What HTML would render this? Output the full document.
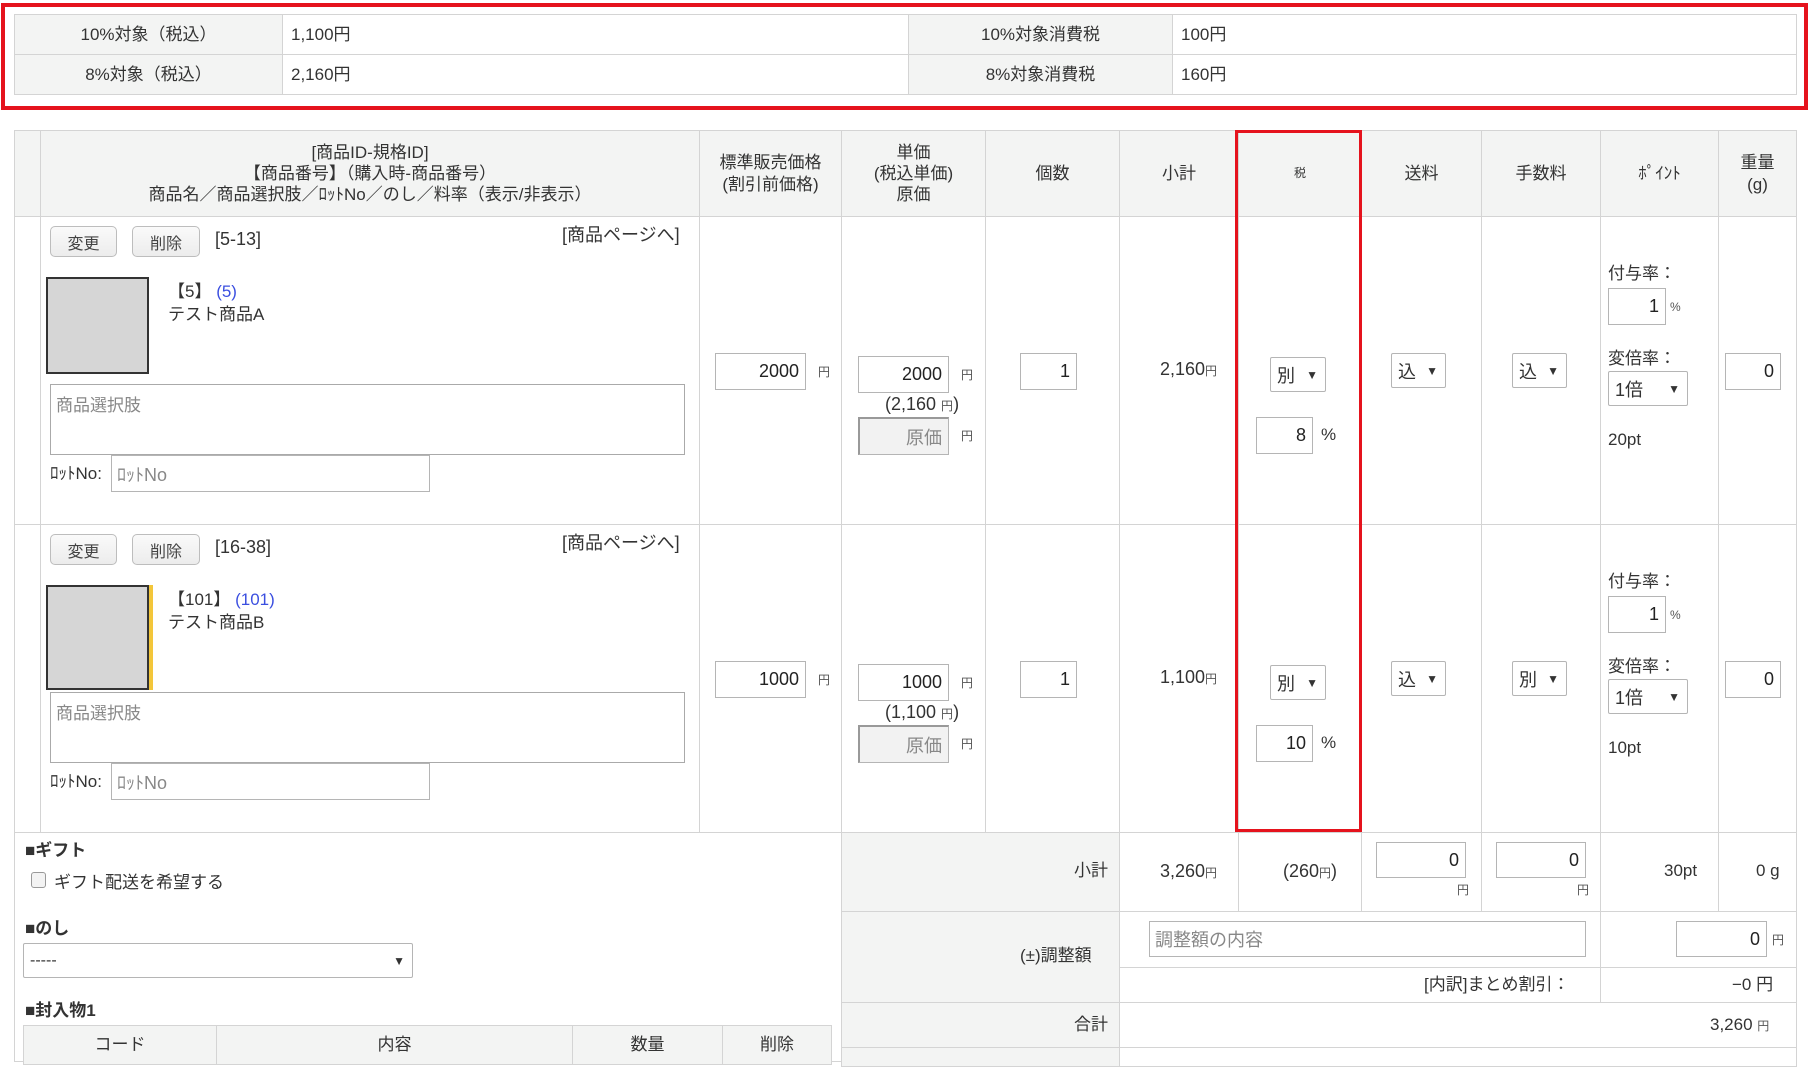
<!DOCTYPE html>
<html><head><meta charset="utf-8"><style>
*{box-sizing:border-box;margin:0;padding:0}
body{width:1810px;height:1051px;background:#fff;position:relative;overflow:hidden;font-family:"Liberation Sans","Noto Sans CJK JP",sans-serif;font-size:17px;color:#333}
.a{position:absolute}
.c{position:absolute;border:1px solid #d4d4d4}
.g{background:#f3f4f3}
.t{position:absolute;white-space:nowrap;line-height:1}
.in{position:absolute;border:1px solid #b5b5b5;background:#fff;text-align:right;padding-right:6px;font-size:18px;color:#222;display:flex;align-items:center;justify-content:flex-end}
.ph{color:#888;justify-content:flex-start;padding-left:5px}
.sel{position:absolute;border:1px solid #b5b5b5;background:#fff;font-size:18px;display:flex;align-items:center;padding-left:6px;border-radius:2px}
.sel span{position:absolute;right:7px;font-size:12px}
.btn{position:absolute;border:1px solid #bdbdbd;border-radius:5px;background:linear-gradient(#fafafa,#ececec);font-size:16px;display:flex;align-items:center;justify-content:center;color:#444}
.y{font-size:12px;color:#555}
.hc{display:flex;align-items:center;justify-content:center;text-align:center;line-height:1.25}
</style></head><body>
<!-- summary -->
<div class="a" style="left:1px;top:3px;width:1807px;height:107px;border:4px solid #e5131d"></div>
<div class="c g hc" style="left:14px;top:14px;width:269px;height:41px">10%対象（税込）</div>
<div class="c" style="left:282px;top:14px;width:627px;height:41px"></div><div class="t" style="left:291px;top:26px">1,100円</div>
<div class="c g hc" style="left:908px;top:14px;width:265px;height:41px">10%対象消費税</div>
<div class="c" style="left:1172px;top:14px;width:625px;height:41px"></div><div class="t" style="left:1181px;top:26px">100円</div>
<div class="c g hc" style="left:14px;top:54px;width:269px;height:41px">8%対象（税込）</div>
<div class="c" style="left:282px;top:54px;width:627px;height:41px"></div><div class="t" style="left:291px;top:66px">2,160円</div>
<div class="c g hc" style="left:908px;top:54px;width:265px;height:41px">8%対象消費税</div>
<div class="c" style="left:1172px;top:54px;width:625px;height:41px"></div><div class="t" style="left:1181px;top:66px">160円</div>

<!-- header -->
<div class="c g" style="left:14px;top:130px;width:27px;height:87px"></div>
<div class="c g hc" style="left:40px;top:130px;width:660px;height:87px">[商品ID-規格ID]<br>【商品番号】（購入時-商品番号）<br>商品名／商品選択肢／ﾛｯﾄNo／のし／料率（表示/非表示）</div>
<div class="c g hc" style="left:699px;top:130px;width:143px;height:87px">標準販売価格<br>(割引前価格)</div>
<div class="c g hc" style="left:841px;top:130px;width:145px;height:87px">単価<br>(税込単価)<br>原価</div>
<div class="c g hc" style="left:985px;top:130px;width:135px;height:87px">個数</div>
<div class="c g hc" style="left:1119px;top:130px;width:120px;height:87px">小計</div>
<div class="c g hc" style="left:1238px;top:130px;width:124px;height:87px;font-size:12px">税</div>
<div class="c g hc" style="left:1361px;top:130px;width:121px;height:87px">送料</div>
<div class="c g hc" style="left:1481px;top:130px;width:120px;height:87px">手数料</div>
<div class="c g hc" style="left:1600px;top:130px;width:119px;height:87px">ﾎﾟｲﾝﾄ</div>
<div class="c g hc" style="left:1718px;top:130px;width:79px;height:87px">重量<br>(g)</div>

<!-- rows -->
<div class="c" style="left:14px;top:216px;width:27px;height:309px"></div>
<div class="c" style="left:40px;top:216px;width:660px;height:309px"></div>
<div class="c" style="left:699px;top:216px;width:143px;height:309px"></div>
<div class="c" style="left:841px;top:216px;width:145px;height:309px"></div>
<div class="c" style="left:985px;top:216px;width:135px;height:309px"></div>
<div class="c" style="left:1119px;top:216px;width:120px;height:309px"></div>
<div class="c" style="left:1238px;top:216px;width:124px;height:309px"></div>
<div class="c" style="left:1361px;top:216px;width:121px;height:309px"></div>
<div class="c" style="left:1481px;top:216px;width:120px;height:309px"></div>
<div class="c" style="left:1600px;top:216px;width:119px;height:309px"></div>
<div class="c" style="left:1718px;top:216px;width:79px;height:309px"></div>

<div class="c" style="left:14px;top:524px;width:27px;height:309px"></div>
<div class="c" style="left:40px;top:524px;width:660px;height:309px"></div>
<div class="c" style="left:699px;top:524px;width:143px;height:309px"></div>
<div class="c" style="left:841px;top:524px;width:145px;height:309px"></div>
<div class="c" style="left:985px;top:524px;width:135px;height:309px"></div>
<div class="c" style="left:1119px;top:524px;width:120px;height:309px"></div>
<div class="c" style="left:1238px;top:524px;width:124px;height:309px"></div>
<div class="c" style="left:1361px;top:524px;width:121px;height:309px"></div>
<div class="c" style="left:1481px;top:524px;width:120px;height:309px"></div>
<div class="c" style="left:1600px;top:524px;width:119px;height:309px"></div>
<div class="c" style="left:1718px;top:524px;width:79px;height:309px"></div>

<!-- row1 content -->
<div class="btn" style="left:50px;top:226px;width:67px;height:31px">変更</div>
<div class="btn" style="left:132px;top:226px;width:68px;height:31px">削除</div>
<div class="t" style="left:215px;top:230px;font-size:18px">[5-13]</div>
<div class="t" style="left:562px;top:226px;font-size:18px">[商品ページへ]</div>
<div class="a" style="left:46px;top:277px;width:103px;height:97px;background:#d6d6d6;border:2px solid #333"></div>
<div class="t" style="left:168px;top:283px">【5】 <span style="color:#3b4fe0">(5)</span></div>
<div class="t" style="left:168px;top:306px">テスト商品A</div>
<div class="a" style="left:50px;top:384px;width:635px;height:71px;border:1px solid #aaa;color:#888;padding:6px 5px">商品選択肢</div>
<div class="t" style="left:50px;top:465px">ﾛｯﾄNo:</div>
<div class="in ph" style="left:111px;top:455px;width:319px;height:37px">ﾛｯﾄNo</div>
<div class="in" style="left:715px;top:353px;width:91px;height:37px">2000</div><div class="t y" style="left:818px;top:366px">円</div>
<div class="in" style="left:858px;top:356px;width:91px;height:37px">2000</div><div class="t y" style="left:961px;top:369px">円</div>
<div class="t" style="left:885px;top:395px;font-size:18px">(2,160 <span class="y">円</span>)</div>
<div class="in" style="left:858px;top:417px;width:91px;height:38px;background:#f2f2f2;color:#888;border-top:2px solid #999;border-left:2px solid #999">原価</div><div class="t y" style="left:961px;top:430px">円</div>
<div class="in" style="left:1020px;top:353px;width:57px;height:37px">1</div>
<div class="t" style="left:1160px;top:360px;font-size:18px">2,160<span class="y">円</span></div>
<div class="sel" style="left:1270px;top:357px;width:56px;height:35px">別<span>▼</span></div>
<div class="in" style="left:1256px;top:417px;width:57px;height:37px">8</div><div class="t" style="left:1321px;top:426px">%</div>
<div class="sel" style="left:1391px;top:353px;width:55px;height:35px">込<span>▼</span></div>
<div class="sel" style="left:1512px;top:353px;width:55px;height:35px">込<span>▼</span></div>
<div class="t" style="left:1608px;top:265px">付与率：</div>
<div class="in" style="left:1608px;top:288px;width:58px;height:37px">1</div><div class="t y" style="left:1670px;top:301px">%</div>
<div class="t" style="left:1608px;top:350px">変倍率：</div>
<div class="sel" style="left:1608px;top:371px;width:80px;height:35px">1倍<span>▼</span></div>
<div class="t" style="left:1608px;top:431px">20pt</div>
<div class="in" style="left:1725px;top:353px;width:56px;height:37px">0</div>

<!-- row2 content -->
<div class="btn" style="left:50px;top:534px;width:67px;height:31px">変更</div>
<div class="btn" style="left:132px;top:534px;width:68px;height:31px">削除</div>
<div class="t" style="left:215px;top:538px;font-size:18px">[16-38]</div>
<div class="t" style="left:562px;top:534px;font-size:18px">[商品ページへ]</div>
<div class="a" style="left:149px;top:585px;width:4px;height:105px;background:#f3c63a"></div>
<div class="a" style="left:46px;top:585px;width:103px;height:105px;background:#d6d6d6;border:2px solid #333"></div>
<div class="t" style="left:168px;top:591px">【101】 <span style="color:#3b4fe0">(101)</span></div>
<div class="t" style="left:168px;top:614px">テスト商品B</div>
<div class="a" style="left:50px;top:692px;width:635px;height:71px;border:1px solid #aaa;color:#888;padding:6px 5px">商品選択肢</div>
<div class="t" style="left:50px;top:773px">ﾛｯﾄNo:</div>
<div class="in ph" style="left:111px;top:763px;width:319px;height:37px">ﾛｯﾄNo</div>
<div class="in" style="left:715px;top:661px;width:91px;height:37px">1000</div><div class="t y" style="left:818px;top:674px">円</div>
<div class="in" style="left:858px;top:664px;width:91px;height:37px">1000</div><div class="t y" style="left:961px;top:677px">円</div>
<div class="t" style="left:885px;top:703px;font-size:18px">(1,100 <span class="y">円</span>)</div>
<div class="in" style="left:858px;top:725px;width:91px;height:38px;background:#f2f2f2;color:#888;border-top:2px solid #999;border-left:2px solid #999">原価</div><div class="t y" style="left:961px;top:738px">円</div>
<div class="in" style="left:1020px;top:661px;width:57px;height:37px">1</div>
<div class="t" style="left:1160px;top:668px;font-size:18px">1,100<span class="y">円</span></div>
<div class="sel" style="left:1270px;top:665px;width:56px;height:35px">別<span>▼</span></div>
<div class="in" style="left:1256px;top:725px;width:57px;height:37px">10</div><div class="t" style="left:1321px;top:734px">%</div>
<div class="sel" style="left:1391px;top:661px;width:55px;height:35px">込<span>▼</span></div>
<div class="sel" style="left:1512px;top:661px;width:55px;height:35px">別<span>▼</span></div>
<div class="t" style="left:1608px;top:573px">付与率：</div>
<div class="in" style="left:1608px;top:596px;width:58px;height:37px">1</div><div class="t y" style="left:1670px;top:609px">%</div>
<div class="t" style="left:1608px;top:658px">変倍率：</div>
<div class="sel" style="left:1608px;top:679px;width:80px;height:35px">1倍<span>▼</span></div>
<div class="t" style="left:1608px;top:739px">10pt</div>
<div class="in" style="left:1725px;top:661px;width:56px;height:37px">0</div>

<!-- tax red box -->
<div class="a" style="left:1235px;top:130px;width:127px;height:702px;border:3px solid #e5131d"></div>

<!-- bottom left -->
<div class="c" style="left:14px;top:832px;width:828px;height:230px"></div>
<div class="t" style="left:25px;top:842px;font-weight:bold">■ギフト</div>
<div class="a" style="left:31px;top:872px;width:15px;height:16px;border:1px solid #999;border-radius:3px;background:#f3f3f3"></div>
<div class="t" style="left:54px;top:874px">ギフト配送を希望する</div>
<div class="t" style="left:25px;top:920px;font-weight:bold">■のし</div>
<div class="sel" style="left:23px;top:943px;width:390px;height:35px;font-size:16px">-----<span>▼</span></div>
<div class="t" style="left:25px;top:1002px;font-weight:bold">■封入物1</div>
<div class="c g hc" style="left:23px;top:1025px;width:194px;height:40px">コード</div>
<div class="c g hc" style="left:216px;top:1025px;width:357px;height:40px">内容</div>
<div class="c g hc" style="left:572px;top:1025px;width:151px;height:40px">数量</div>
<div class="c g hc" style="left:722px;top:1025px;width:110px;height:40px">削除</div>

<!-- bottom right -->
<div class="c g" style="left:841px;top:832px;width:279px;height:80px"></div><div class="t" style="left:1074px;top:862px">小計</div>
<div class="c" style="left:1119px;top:832px;width:120px;height:80px"></div><div class="t" style="left:1160px;top:862px;font-size:18px">3,260<span class="y">円</span></div>
<div class="c" style="left:1238px;top:832px;width:124px;height:80px"></div><div class="t" style="left:1283px;top:862px;font-size:18px">(260<span class="y">円</span>)</div>
<div class="c" style="left:1361px;top:832px;width:121px;height:80px"></div><div class="in" style="left:1376px;top:842px;width:90px;height:36px">0</div><div class="t y" style="left:1457px;top:884px">円</div>
<div class="c" style="left:1481px;top:832px;width:120px;height:80px"></div><div class="in" style="left:1496px;top:842px;width:90px;height:36px">0</div><div class="t y" style="left:1577px;top:884px">円</div>
<div class="c" style="left:1600px;top:832px;width:119px;height:80px"></div><div class="t" style="left:1664px;top:862px">30pt</div>
<div class="c" style="left:1718px;top:832px;width:79px;height:80px"></div><div class="t" style="left:1756px;top:862px">0 g</div>

<div class="c g" style="left:841px;top:911px;width:279px;height:92px"></div><div class="t" style="left:1020px;top:947px">(±)調整額</div>
<div class="c" style="left:1119px;top:911px;width:482px;height:57px"></div>
<div class="in ph" style="left:1149px;top:921px;width:437px;height:36px">調整額の内容</div>
<div class="c" style="left:1600px;top:911px;width:197px;height:57px"></div>
<div class="in" style="left:1676px;top:921px;width:91px;height:36px">0</div><div class="t y" style="left:1772px;top:934px">円</div>
<div class="c" style="left:1119px;top:967px;width:482px;height:36px"></div><div class="t" style="left:1424px;top:976px">[内訳]まとめ割引：</div>
<div class="c" style="left:1600px;top:967px;width:197px;height:36px"></div><div class="t" style="left:1732px;top:976px">−0 円</div>
<div class="c g" style="left:841px;top:1002px;width:279px;height:46px"></div><div class="t" style="left:1074px;top:1016px">合計</div>
<div class="c" style="left:1119px;top:1002px;width:678px;height:46px"></div><div class="t" style="left:1710px;top:1016px">3,260 <span class="y">円</span></div>
<div class="c g" style="left:841px;top:1047px;width:279px;height:20px"></div>
<div class="c" style="left:1119px;top:1047px;width:678px;height:20px"></div>
</body></html>
